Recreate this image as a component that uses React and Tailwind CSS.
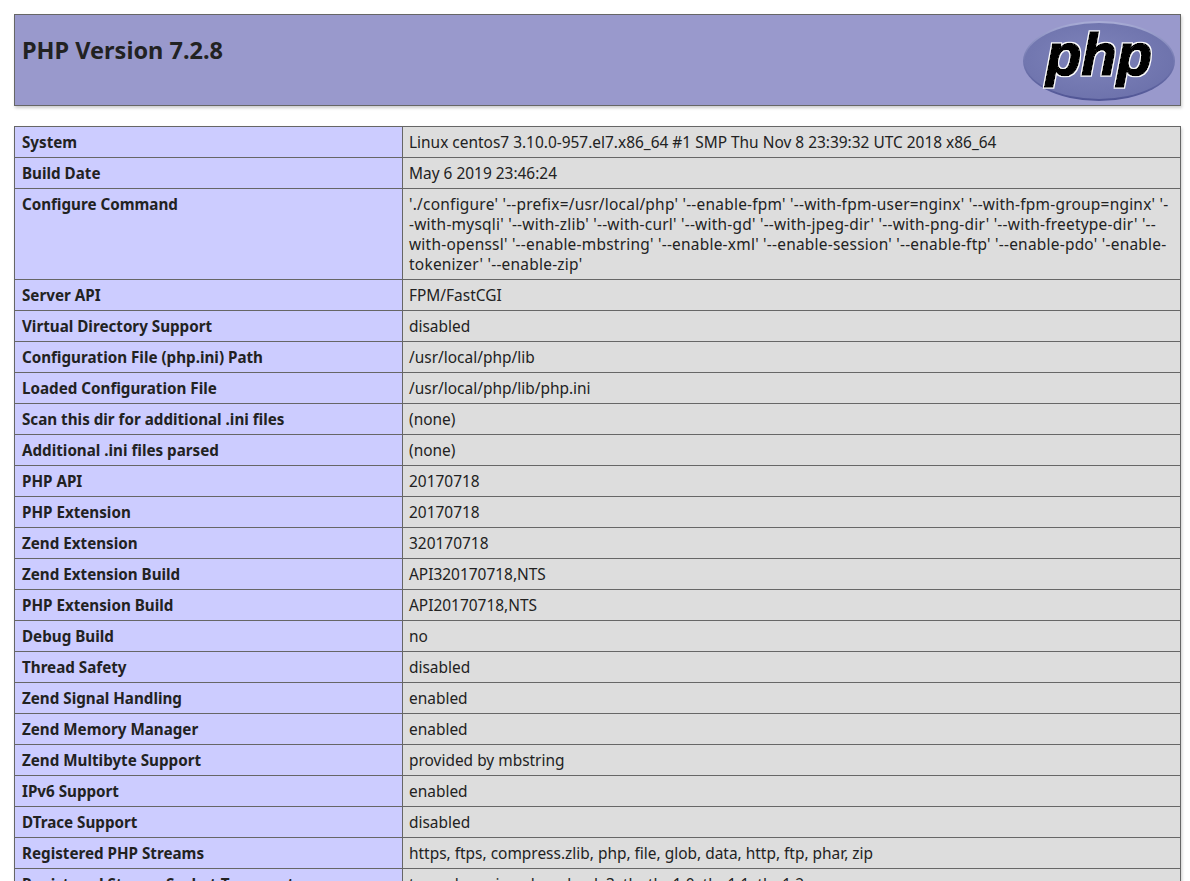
const rows = [
  ["System", "Linux centos7 3.10.0-957.el7.x86_64 #1 SMP Thu Nov 8 23:39:32 UTC 2018 x86_64"],
  ["Build Date", "May 6 2019 23:46:24"],
  [
    "Configure Command",
    "'./configure' '--prefix=/usr/local/php' '--enable-fpm' '--with-fpm-user=nginx' '--with-fpm-group=nginx' '-\n-with-mysqli' '--with-zlib' '--with-curl' '--with-gd' '--with-jpeg-dir' '--with-png-dir' '--with-freetype-dir' '--\nwith-openssl' '--enable-mbstring' '--enable-xml' '--enable-session' '--enable-ftp' '--enable-pdo' '-enable-\ntokenizer' '--enable-zip'",
  ],
  ["Server API", "FPM/FastCGI"],
  ["Virtual Directory Support", "disabled"],
  ["Configuration File (php.ini) Path", "/usr/local/php/lib"],
  ["Loaded Configuration File", "/usr/local/php/lib/php.ini"],
  ["Scan this dir for additional .ini files", "(none)"],
  ["Additional .ini files parsed", "(none)"],
  ["PHP API", "20170718"],
  ["PHP Extension", "20170718"],
  ["Zend Extension", "320170718"],
  ["Zend Extension Build", "API320170718,NTS"],
  ["PHP Extension Build", "API20170718,NTS"],
  ["Debug Build", "no"],
  ["Thread Safety", "disabled"],
  ["Zend Signal Handling", "enabled"],
  ["Zend Memory Manager", "enabled"],
  ["Zend Multibyte Support", "provided by mbstring"],
  ["IPv6 Support", "enabled"],
  ["DTrace Support", "disabled"],
  ["Registered PHP Streams", "https, ftps, compress.zlib, php, file, glob, data, http, ftp, phar, zip"],
  ["Registered Stream Socket Transports", "tcp, udp, unix, udg, ssl, sslv3, tls, tlsv1.0, tlsv1.1, tlsv1.2"],
];

function PhpLogo() {
  return (
    <svg width="154" height="82" viewBox="0 0 154 82" className="shrink-0">
      <defs>
        <linearGradient id="logoRim" x1="0" y1="0" x2="0" y2="1">
          <stop offset="0" stopColor="#a9add6" />
          <stop offset="0.5" stopColor="#7378b0" />
          <stop offset="1" stopColor="#4f5494" />
        </linearGradient>
        <radialGradient id="logoFill" cx="0.45" cy="0.45" r="0.65">
          <stop offset="0" stopColor="#7f84bb" />
          <stop offset="1" stopColor="#6b70aa" />
        </radialGradient>
        <filter id="logoOutline" x="-10%" y="-10%" width="120%" height="120%">
          <feMorphology in="SourceAlpha" operator="dilate" radius="1.4" result="fat" />
          <feFlood floodColor="#ffffff" />
          <feComposite in2="fat" operator="in" result="halo" />
          <feMerge>
            <feMergeNode in="halo" />
            <feMergeNode in="SourceGraphic" />
          </feMerge>
        </filter>
      </defs>
      <ellipse cx="77" cy="41" rx="76" ry="40" fill="url(#logoRim)" />
      <ellipse cx="77" cy="41" rx="74.5" ry="38" fill="url(#logoFill)" />
      <text
        x="24"
        y="55"
        textLength="106"
        lengthAdjust="spacingAndGlyphs"
        fontFamily="Liberation Sans, sans-serif"
        fontSize="60"
        fontStyle="italic"
        fontWeight="700"
        fill="#000"
        stroke="#000"
        strokeWidth="1.6"
        filter="url(#logoOutline)"
      >
        php
      </text>
    </svg>
  );
}

export default function App() {
  return (
    <div className="h-[881px] overflow-hidden bg-white pt-[14px] pl-[14px] text-[#222] font-['Noto_Sans','Open_Sans',sans-serif] text-[15px] leading-[20px]">
      {/* Header */}
      <div className="flex w-[1167px] h-[92px] items-start justify-between border border-[#666] bg-[#9999cc] pl-[7px] pr-[4px] pt-[5px] shadow-[1px_2px_3px_#ccc]">
        <h1 className="mt-[16px] text-[23.5px] leading-[28px] font-bold">PHP Version 7.2.8</h1>
        <PhpLogo />
      </div>

      {/* Tabla */}
      <table className="mt-[20px] w-[1167px] table-fixed border-collapse shadow-[1px_2px_3px_#ccc]">
        <colgroup>
          <col className="w-[388px]" />
          <col />
        </colgroup>
        <tbody>
          {rows.map(([name, value]) => (
            <tr key={name}>
              <td className="border border-[#666] bg-[#ccccff] px-[7px] py-[5px] align-top text-[15.2px] font-bold">{name}</td>
              <td
                className={`border border-[#666] bg-[#dddddd] pl-[6px] pr-[4px] py-[5px] align-top text-[15.45px] whitespace-pre-line ${
                  name === "Configure Command" ? "tracking-[0.24px]" : ""
                }`}
              >
                {value}
              </td>
            </tr>
          ))}
        </tbody>
      </table>
    </div>
  );
}
